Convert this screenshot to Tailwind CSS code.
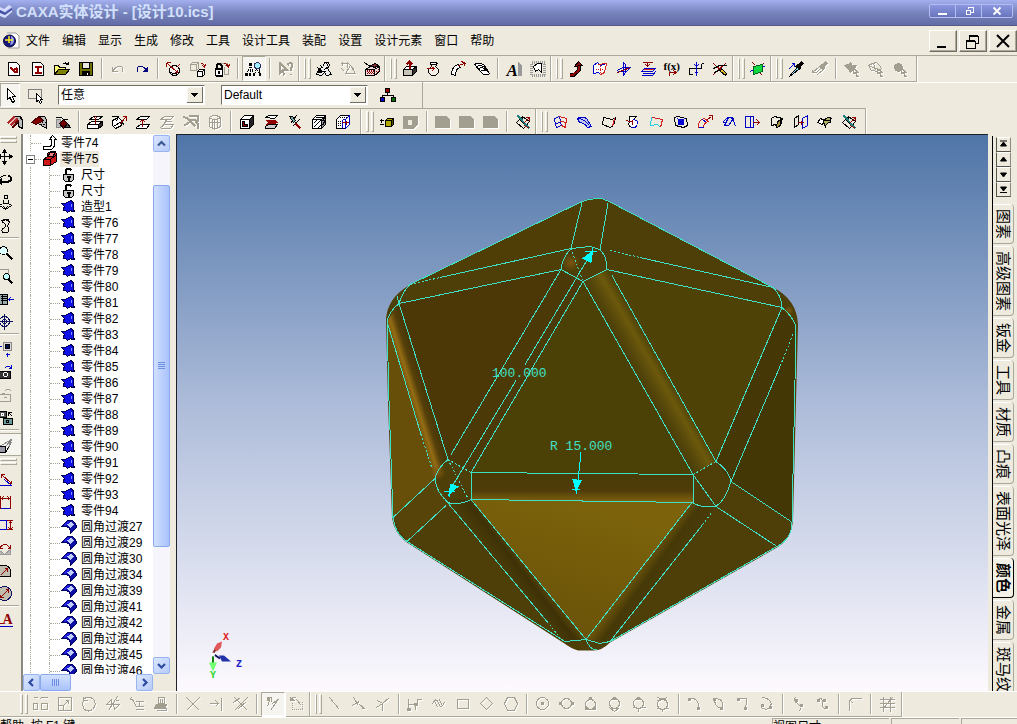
<!DOCTYPE html>
<html lang="zh-CN">
  <head>
    <meta charset="utf-8" />
    <title>CAXA实体设计 - [设计10.ics]</title>
    <script src="https://cdn.jsdelivr.net/npm/@tailwindcss/browser@4"></script>
  </head>
  <body class="h-screen overflow-hidden flex flex-col bg-[#eeeade] text-black text-xs font-['Liberation_Sans','Noto_Sans_CJK_SC',sans-serif]">
    <!-- Title bar -->
    <header class="h-[26px] shrink-0 flex items-center bg-linear-to-b from-[#a3b0f0] via-[#7884bd] to-[#626ba5] border-b border-[#55598a]">
      <svg class="w-3 h-6 shrink-0" viewBox="0 0 12 24">
        <path d="M0 6L4 8L9 4L12 6L5 11L0 9ZM0 11L5 13L12 8V11L5 17L0 15Z" fill="#d5dcff" />
        <path d="M0 9L5 12L12 7V9L5 14L0 12Z" fill="#4450a8" />
      </svg>
      <h1 class="ml-1 pb-0.5 flex-1 text-[15px] leading-5 font-bold text-[#d3e0fb] whitespace-nowrap">CAXA实体设计 - [设计10.ics]</h1>
      <div class="mr-1 flex h-3.5 mb-1 rounded-xs border border-[#b4bdf2] bg-linear-to-b from-[#8a97e0] to-[#6975bb]">
        <button class="w-[26px] flex justify-center items-center border-r border-[#b4bdf2]" aria-label="最小化">
          <svg class="w-3 h-3" viewBox="0 0 12 12"><path d="M1 8H10V10H1Z" fill="#fff" /></svg>
        </button>
        <button class="w-[26px] flex justify-center items-center border-r border-[#b4bdf2]" aria-label="还原">
          <svg class="w-3 h-3" viewBox="0 0 12 12" shape-rendering="crispEdges"><path d="M5 4V2.5H10V7H8M3 5.500H7.500V9.500H3Z" fill="none" stroke="#fff" /></svg>
        </button>
        <button class="w-[30px] flex justify-center items-center" aria-label="关闭">
          <svg class="w-3 h-3" viewBox="0 0 12 12"><path d="M2.500 2.500L9.500 9.500M9.500 2.500L2.500 9.500" stroke="#fff" stroke-width="1.800" /></svg>
        </button>
      </div>
    </header>

    <!-- Menu bar -->
    <nav class="h-[30px] shrink-0 flex items-center border-b border-[#aca899]">
      <svg class="w-[18px] h-[18px] ml-0.5 shrink-0" viewBox="0 0 18 18">
        <path d="M5 1H14L17 4V16H6" fill="#fff" stroke="#999" />
        <circle cx="7.500" cy="9" r="6" fill="#15157c" stroke="#080840" />
        <path d="M9 4C12 5 13 8 11 12L8 13L9 9Z" fill="#8fa0e8" />
        <path d="M7 4V11M3 8H11" stroke="#ffef20" stroke-width="1.500" />
      </svg>
      <div id="menu" class="flex flex-1 leading-4 whitespace-nowrap"></div>
      <div class="flex gap-0.5">
        <button class="w-7 h-[22px] bg-[#eeeade] border border-t-white border-l-white border-r-[#716f64] border-b-[#716f64] shadow-[inset_-1px_-1px_0_#aca899]" aria-label="最小化文档">
          <svg class="w-full h-full" viewBox="0 0 26 20"><path d="M7 15H16V17H7Z" /></svg>
        </button>
        <button class="w-7 h-[22px] bg-[#eeeade] border border-t-white border-l-white border-r-[#716f64] border-b-[#716f64] shadow-[inset_-1px_-1px_0_#aca899]" aria-label="还原文档">
          <svg class="w-full h-full" viewBox="0 0 26 20" shape-rendering="crispEdges"><path d="M9 9V5H18V12H15M6 10H15V17H6Z" fill="none" stroke="#000" stroke-width="1" /><path d="M9 5H18M6 10H15" stroke="#000" stroke-width="2" /></svg>
        </button>
        <button class="w-7 h-[22px] bg-[#eeeade] border border-t-white border-l-white border-r-[#716f64] border-b-[#716f64] shadow-[inset_-1px_-1px_0_#aca899]" aria-label="关闭文档">
          <svg class="w-full h-full" viewBox="0 0 26 20"><path d="M7 4L19 16M19 4L7 16" stroke="#000" stroke-width="2" /></svg>
        </button>
      </div>
    </nav>

    <!-- Standard tools -->
    <div class="h-[26px] shrink-0 flex">
      <div
        class="flex pl-0.5 pr-1 border-r border-b border-[#aca899] shadow-[1px_1px_0_#fff]"
        role="toolbar"
        data-tools="newdoc newdraw open save | undo:d redo | sphere cubes lockcube | *find | help:d || mech mechOff:d redbox || extrude pot sweep loft | letterA stamp || elbow patch planes stack fx axis cutpen || green || dropper dropOff:d | blob1:d blob2:d blob3:d"
      ></div>
    </div>

    <!-- Selection filters -->
    <div class="h-[26px] shrink-0 flex">
      <div class="flex items-center border-r border-[#aca899] w-[423px]">
        <button class="w-5 h-6 flex items-center justify-center border border-[#aca899] border-b-white border-r-white bg-[#f6f4ee]" aria-label="选择">
          <svg class="w-[18px] h-[18px] shrink-0" viewBox="-.5 -.5 18 18" shape-rendering="crispEdges"><path d="M6 2V13L8.500 11L11 16L13 15L11 10H14Z" fill="#fff" stroke="#000" /></svg>
        </button>
        <button class="w-6 h-6 ml-1 flex items-center justify-center" aria-label="框选">
          <svg class="w-[18px] h-[18px] shrink-0" viewBox="-.5 -.5 18 18" shape-rendering="crispEdges"><path d="M1 3H14V12H1Z" fill="none" stroke="#808080" /><path d="M9 7V15L11 14L13 17L14 16L13 13H15Z" fill="#fff" stroke="#000" /></svg>
        </button>
        <label class="relative ml-2.5">
          <span class="sr-only">过滤</span>
          <select class="appearance-none block w-[147px] h-5 pl-0.5 pr-5 bg-white border border-[#716f64] border-r-white border-b-white leading-[18px]">
            <option>任意</option>
          </select>
          <svg class="absolute right-0.5 top-0.5 w-4 h-4 pointer-events-none" viewBox="0 0 16 16" shape-rendering="crispEdges"><path d="M0 0H16V16H0Z" fill="#716f64" /><path d="M0 0H15V15H0Z" fill="#f8f6f0" /><path d="M1 1H15V15H1Z" fill="#eeeade" /><path d="M4 6H11L7.500 10Z" /></svg>
        </label>
        <label class="relative ml-4">
          <span class="sr-only">配置</span>
          <select class="appearance-none block w-[147px] h-5 pl-0.5 pr-5 bg-white border border-[#716f64] border-r-white border-b-white leading-[18px]">
            <option>Default</option>
          </select>
          <svg class="absolute right-0.5 top-0.5 w-4 h-4 pointer-events-none" viewBox="0 0 16 16" shape-rendering="crispEdges"><path d="M0 0H16V16H0Z" fill="#716f64" /><path d="M0 0H15V15H0Z" fill="#f8f6f0" /><path d="M1 1H15V15H1Z" fill="#eeeade" /><path d="M4 6H11L7.500 10Z" /></svg>
        </label>
        <button class="w-6 h-6 ml-2 flex items-center justify-center" aria-label="结构">
          <svg class="w-[18px] h-[18px] shrink-0" viewBox="-.5 -.5 18 18" shape-rendering="crispEdges"><path d="M8 6V9M3 11V9H14V11" fill="none" stroke="#000" /><path d="M6 2H10V6H6Z" fill="#900000" stroke="#000" /><path d="M1 11H5V15H1Z" fill="#0000c0" stroke="#000" /><path d="M12 11H16V15H12Z" fill="#007000" stroke="#000" /></svg>
        </button>
      </div>
      <div class="flex-1 border-t border-white"></div>
    </div>

    <!-- Feature and surface tools -->
    <div class="h-[26px] shrink-0 flex">
      <div
        class="flex pl-[3px] pr-1 border-r border-t border-[#aca899] shadow-[1px_0_0_#fff]"
        role="toolbar"
        data-tools="fillet chamfer draft | shell trim lift liftOff:d rib:d cyl:d | cubeL sandwich cross hatch hatch2 ||| plusbox cubeOff:d | g1:d g2:d g3:d | sketchcut || mesh coons sheet pot3 sheet2 star pipe offset extend sheet3 mirror wrap sketchcut"
      ></div>
    </div>

    <!-- Workspace -->
    <main class="flex-1 min-h-0 flex">
      <aside id="side" class="w-[21px] shrink-0 overflow-hidden flex flex-col" role="toolbar"></aside>

      <!-- Design tree -->
      <section class="w-[151px] shrink-0 flex flex-col pr-0.5 border-l-2 border-[#8c8980] bg-[#eeeade]">
        <div class="flex-1 min-h-0 flex">
          <ul id="tree" class="flex-1 min-w-0 pt-px overflow-hidden bg-white leading-4 whitespace-nowrap"></ul>
          <div class="w-[17px] shrink-0 flex flex-col pt-px bg-[#f5f5fb]">
            <button class="h-[17px] rounded-xs border border-[#98b4ee] bg-linear-to-br from-[#dbe6ff] to-[#b7cbf8]" aria-label="向上">
              <svg class="w-full h-full" viewBox="0 0 15 15"><path d="M4 9.500L7.500 6L11 9.500" fill="none" stroke="#3c5a90" stroke-width="2.200" /></svg>
            </button>
            <div class="h-[33px]"></div>
            <div class="h-[362px] flex items-center justify-center rounded-xs border border-[#8aa8ea] bg-linear-to-r from-[#d2e0ff] to-[#a9c2fb]">
              <svg class="w-2 h-2" viewBox="0 0 8 8" shape-rendering="crispEdges"><path d="M0 .5H7M0 2.500H7M0 4.500H7M0 6.500H7" stroke="#6c8fe0" /></svg>
            </div>
            <div class="flex-1"></div>
            <button class="h-[17px] rounded-xs border border-[#98b4ee] bg-linear-to-br from-[#dbe6ff] to-[#b7cbf8]" aria-label="向下">
              <svg class="w-full h-full" viewBox="0 0 15 15"><path d="M4 6L7.500 9.500L11 6" fill="none" stroke="#2c4aa0" stroke-width="2.200" /></svg>
            </button>
          </div>
        </div>
        <div class="h-[17px] shrink-0 flex mr-[17px] bg-[#f8f8fc]">
          <button class="w-[17px] rounded-xs border border-[#98b4ee] bg-linear-to-br from-[#dbe6ff] to-[#b7cbf8]" aria-label="向左">
            <svg class="w-full h-full" viewBox="0 0 15 15"><path d="M9 4L5.500 7.500L9 11" fill="none" stroke="#2c4aa0" stroke-width="2.200" /></svg>
          </button>
          <div class="w-[31px] flex items-center justify-center rounded-xs border border-[#8aa8ea] bg-linear-to-b from-[#d2e0ff] to-[#a9c2fb]">
            <svg class="w-2 h-2" viewBox="0 0 8 8" shape-rendering="crispEdges"><path d="M.5 0V7M2.500 0V7M4.500 0V7M6.500 0V7" stroke="#6c8fe0" /></svg>
          </div>
          <div class="flex-1"></div>
          <button class="w-[17px] rounded-xs border border-[#98b4ee] bg-linear-to-br from-[#dbe6ff] to-[#b7cbf8]" aria-label="向右">
            <svg class="w-full h-full" viewBox="0 0 15 15"><path d="M6 4L9.500 7.500L6 11" fill="none" stroke="#2c4aa0" stroke-width="2.200" /></svg>
          </button>
        </div>
      </section>

      <!-- 3D viewport -->
      <section class="ml-1 flex-1 min-w-0 border-t border-l border-[#202028] bg-linear-to-b from-[#4f75a7] from-0% via-[#b0bedb] via-50% to-[#fdf9fe] to-100%">
        <svg class="block w-full h-full" viewBox="177 135 811 555">
          <defs>
            <linearGradient id="bandRight" gradientUnits="userSpaceOnUse" x1="636" y1="378" x2="662" y2="363">
              <stop offset="0" stop-color="#483b06" />
              <stop offset=".3" stop-color="#54460a" />
              <stop offset=".7" stop-color="#6c590c" />
              <stop offset="1" stop-color="#4d4107" />
            </linearGradient>
            <linearGradient id="bandMid" x1="0" y1="0" x2="0" y2="1">
              <stop offset="0" stop-color="#493b06" />
              <stop offset=".6" stop-color="#4f3c08" />
              <stop offset="1" stop-color="#82640f" />
            </linearGradient>
            <linearGradient id="bandLeft" gradientUnits="userSpaceOnUse" x1="408" y1="396" x2="424" y2="391">
              <stop offset="0" stop-color="#6b500a" />
              <stop offset=".35" stop-color="#946c14" />
              <stop offset=".7" stop-color="#55400a" />
              <stop offset="1" stop-color="#4a3807" />
            </linearGradient>
            <linearGradient id="bandLow" gradientUnits="userSpaceOnUse" x1="508" y1="575" x2="530" y2="558">
              <stop offset="0" stop-color="#4a3c08" />
              <stop offset=".5" stop-color="#3e3106" />
              <stop offset="1" stop-color="#6b540a" />
            </linearGradient>
            <linearGradient id="bandLow2" gradientUnits="userSpaceOnUse" x1="636" y1="570" x2="658" y2="586">
              <stop offset="0" stop-color="#6f570a" />
              <stop offset=".5" stop-color="#463908" />
              <stop offset="1" stop-color="#493c08" />
            </linearGradient>
            <linearGradient id="bottomFace" gradientUnits="userSpaceOnUse" x1="600" y1="500" x2="560" y2="640">
              <stop offset="0" stop-color="#7c630b" />
              <stop offset="1" stop-color="#6a5209" />
            </linearGradient>
            <radialGradient id="glow">
              <stop offset="0" stop-color="#7a5510" />
              <stop offset="1" stop-color="#7a5510" stop-opacity="0" />
            </radialGradient>
          </defs>

          <!-- Solid body -->
          <path d="M582 201Q590 197 602 198Q607 199 611 202L773 287Q797 299 798 324L796 400L793 520Q791 539 777 547L610 642Q602 650 594 650H578Q571 648 563 642L407 542Q394 533 392 517L388 400L386 318Q388 297 409 285Z" fill="#4d3f07" />
          <path d="M399 303L561 269L448 459Z" fill="#4b3806" />
          <path d="M410 284L582 201L571 248Z" fill="#503e07" />
          <path d="M387 321L435 478L393 517L389 400Z" fill="#684f09" />
          <path d="M387 321L399 303L448 459L435 478Z" fill="url(#bandLeft)" />
          <path d="M561 269L583 281L471 472L448 459Z" fill="#4b3a07" />
          <path d="M583 281L693 474L471 472Z" fill="#4b4107" />
          <path d="M607 269L782 307L716 461Z" fill="#4f4207" />
          <path d="M583 281L607 269L716 461L693 474Z" fill="url(#bandRight)" />
          <path d="M782 307L796 326L731 481L716 461Z" fill="#453806" />
          <path d="M796 326L792 522L731 481Z" fill="#443706" />
          <path d="M471 472L693 474V502L471 499Z" fill="url(#bandMid)" />
          <path d="M471 499L692 502L586 639Z" fill="url(#bottomFace)" />
          <path d="M435 478L450 503L407 541L393 517Z" fill="#574409" />
          <path d="M445 499L471 499L586 639L565 641Z" fill="url(#bandLow)" />
          <path d="M692 502L716 506L610 641L586 639Z" fill="url(#bandLow2)" />
          <circle cx="571" cy="262" r="9" fill="url(#glow)" />
          <circle cx="438" cy="472" r="8" fill="url(#glow)" />
          <circle cx="789" cy="310" r="5" fill="url(#glow)" />

          <!-- Edges -->
          <g fill="none" stroke="#3fe0c4" stroke-width="1" shape-rendering="crispEdges">
            <path d="M582 201L410 284M582 201Q590 198 602 198L611 202L773 287M582 202L571 248M608 203L600 249" />
            <path d="M440 277L571 248L590 246L600 249M399 303L561 269L583 281L607 269L782 307M640 257L773 287" />
            <path d="M571 248Q562 258 561 269M600 249Q607 256 607 269M410 284Q402 292 399 303Q389 311 387 321M397 296L399 303M773 287Q781 294 782 307Q792 315 796 326" />
            <path d="M387 321L389 400L393 517Q395 534 407 541L565 641L586 639L600 643L610 641L777 546Q792 538 792 522L795 380L796 326" />
            <path d="M387 321L421 434M399 303L448 459M561 269L451 454M583 281L471 472M583 281L693 474M612 275L716 461" />
            <path d="M782 307L716 461M780 366L731 481M471 472L693 474V502L471 499Z" />
            <path d="M448 459Q437 468 435 478Q436 493 450 503Q462 504 471 499M435 478L393 517M446 505L407 541M445 499L547 621M471 499L586 639Q590 650 597 649" />
            <path d="M586 639L692 502M702 525L610 641M693 474L716 506M716 461Q729 470 731 481Q726 499 716 506Q702 508 692 502M731 481L791 521M716 506L777 546" />
            <path d="M410 284L440 277M610 250L640 257M793 334L780 366M421 434L432 468M448 459L471 472M693 474L716 461M571 248L583 281M448 459L468 498M547 621L559 636M711 513L702 525" stroke-dasharray="2 2" />
          </g>

          <!-- Dimensions -->
          <g fill="none" stroke="#00ffff" shape-rendering="crispEdges">
            <path d="M588 258L525 364M516 380L452 486" stroke="#3fe0c4" />
            <path d="M581 452L578 480" />
            <path d="M592 251L583 258L591 262ZM449 494L451 484L458 486ZM576 490L573 479L581 480Z" fill="#00ffff" />
            <path d="M585 251H597M592 247V254M444 491H455M449 487V496M572 489H580M576 486V493" />
          </g>
          <g fill="#3fe0c4" class="font-['Liberation_Mono',monospace] text-[13px]">
            <text x="492" y="376">100.000</text>
            <text x="550" y="449">R 15.000</text>
          </g>

          <!-- Axis triad -->
          <path d="M213 654V664" stroke="#108010" stroke-width="2" />
          <path d="M209 662H217L213 671Z" fill="#70ff70" />
          <path d="M213 653L216 648" stroke="#802020" stroke-width="2" />
          <path d="M214 648L217 643L222 641L221 647L217 651Z" fill="#e05858" />
          <path d="M214 654L220 658" stroke="#101060" stroke-width="2" />
          <path d="M219 655L224 655L231 661L222 661Z" fill="#2030a8" />
          <circle cx="213" cy="654" r="2" fill="#fff" />
          <g class="font-['Liberation_Mono',monospace] text-[10px] font-bold">
            <text x="223" y="639" fill="#e02020">X</text>
            <text x="236" y="666" fill="#2020c8">Z</text>
            <text x="210" y="677" fill="#20d820">Y</text>
          </g>
        </svg>
      </section>

      <!-- Catalog tabs -->
      <aside class="w-[29px] shrink-0 pl-1 pr-0.5 pt-0.5 overflow-hidden flex flex-col">
        <div id="pager" class="flex flex-col pl-[3px] h-[68px] border-l border-black pt-px"></div>
        <div id="catalog" class="flex-1 min-h-0 overflow-hidden flex flex-col border-l border-black"></div>
      </aside>
    </main>

    <!-- Sketch tools -->
    <div class="h-[26px] shrink-0 flex border-t border-white">
      <div
        class="flex pl-[15px] pr-0.5 border-r border-b border-[#aca899] shadow-[1px_1px_0_#fff]"
        role="toolbar"
        data-tools="= move:d scale:d rotate:d mirr:d offs:d stampS:d | x:d ext:d xcut:d | *proj:d projRef:d || line:d tan:d perp:d | poly:d spl:d rect:d diamond:d hexa:d | c1:d c2:d c3:d c4:d c5:d c6:d | a1:d a2:d a3:d a4:d | s1:d s2:d | corner:d | grid:d"
      ></div>
    </div>

    <!-- Status bar -->
    <footer class="h-[7px] shrink-0 flex overflow-hidden border-t border-white leading-4">
      <p class="flex-1 whitespace-nowrap">帮助, 按 F1 键.</p>
      <div class="w-[117px] border-l border-t border-[#aca899] whitespace-nowrap">视图尺寸</div>
      <div class="w-[68px] ml-0.5 border-l border-t border-[#aca899]"></div>
      <div class="w-14 ml-0.5 border-l border-t border-[#aca899]"></div>
    </footer>

    <script>
      const G = '#a39f90';
      const R = '#900000';
      const B = '#0000c8';
      const K = '#000';

      // outline only / filled with an outline
      const s = (c, d, w = 1) => `<path d="${d}" fill="none" stroke="${c}" stroke-width="${w}"/>`;
      const f = (c, d, k = K) => `<path d="${d}" fill="${c}" stroke="${k}"/>`;
      const o = (c, x, y, r, fill = 'none') =>
        `<circle cx="${x}" cy="${y}" r="${r}" fill="${fill}" stroke="${c}"/>`;

      const cube = f('#fff', 'M2 6L6 2H15V11L11 15H2Z') + f('#999', 'M11 6L15 2V11L11 15Z') + s(K, 'M2 6H11V15');
      const cut = s(K, 'M2 9L8 3L15 8L9 15ZM5 6L12 12M8 3L8 9') + s('#208080', 'M3 2L15 15', 2) + s(R, 'M15 4L9 10M11 4H15V7M10 12L15 15');
      const gblock = f(G, 'M1 3H12L15 6V14H7L1 14Z', G);
      const dots = (c, d) => `<path d="${d}" fill="none" stroke="${c}" stroke-dasharray="1 1"/>`;

      const icons = {
        newdoc: f('#fff', 'M3 2H11L14 5V15H3Z') + s(R, 'M5 7L8 10L12 7M8 11H11V8', 2),
        newdraw: f('#fff', 'M3 2H11L14 5V15H3Z') + s(R, 'M5 6H12M5 12H12M8.500 6V12', 2),
        open: f('#ffff70', 'M1 14V5H5L6 7H12V9') + f('#808000', 'M1 14L5 9H16L12 14Z') + s(K, 'M9 4Q12 1 15 4M15 1V4H12'),
        save: f('#707000', 'M2 2H15V15H2Z') + f('#e8e8e0', 'M5 2H12V8H5Z') + f(K, 'M5 11H12V15H5Z') + s('#fff', 'M10 12V14'),
        undo: s(G, 'M3 6V11H8M3 11Q8 4 12 6Q15 8 12 12'),
        redo: s('#000080', 'M14 6V11H9M14 11Q9 4 5 6Q2 8 5 12') + f('#000080', 'M14 7V11H10Z', '#000080'),
        sphere: o(K, 9, 10, 5, '#f4f0ec') + s(K, 'M5 12Q9 14 13 12') + s(R, 'M1 2H5M1 2V6M2 3L12 12M12 9V12H9M14 4L11 7'),
        cubes: s(G, 'M1 4L3 2H9V8L7 10H1ZM1 4H7V10M7 4L9 2') + f('#fff', 'M8 11L10 9H15V14L13 16H8Z') + s(K, 'M8 11H13V16M13 11L15 9') + s(R, 'M11 3Q15 3 15 6M13 5L15 7L16 4'),
        lockcube: s(G, 'M6 3H14L11 6M11 6V14M15 8V14H10') + f('#fff', 'M2 8H9V15H2Z') + s(K, 'M3 8V5Q5 2 8 5V8M2 8H9M2 15H9M5 10V13', 2) + s(R, 'M10 3Q14 3 15 6M13 5L15 7L16 4'),
        find: dots(K, 'M5 3L1 14M5 3L8 14M11 8L9 14M11 8L15 15M5 4V14M2 10H8') + f(K, 'M4 3H6V5H4ZM0 13H2V15H0ZM4 13H5V15H4ZM8 13H9V15H8ZM14 13H15V15H14Z') + o('#303060', 12, 5, 3, '#a0f0ff') + s(K, 'M14 8V12'),
        help: s(G, 'M2 2V13L5 10L7 15M2 2L9 9H5', 2) + s(G, 'M10 5Q11 2 14 3Q16 5 13 8V10M13 13V14', 2),
        mech: f('#eee', 'M1 14L3 9L8 6L9 2H13L14 5L12 8L16 14L11 15L9 12L6 15Z') + s(K, 'M2 7L8 12M3 11H10M11 3L13 6L9 9M5 5L7 8', 1) + f(K, 'M3 10H6V12H3Z'),
        mechOff: s(G, 'M1 3H8V7M3 1V5M6 13L11 5L16 13ZM2 8L5 11') + s(G, 'M8 2L15 9'),
        redbox: f('#f0dada', 'M2 9L7 6H16V11L11 15H2Z') + dots(R, 'M3 11H11M3 13H11M4 12H11M13 10V13M15 8V12M3 10H11') + s(K, 'M2 9H11V15M11 9L16 6M1 2L5 5M4 4L7 7', 1) + f('#803030', 'M7 5L12 3L15 5L11 7Z'),
        extrude: f('#fff', 'M2 9L5 6H15L11 9Z') + f('#c8c4b8', 'M2 9H11V15H2Z') + f('#333', 'M11 9L15 6V11L11 15Z') + s(R, 'M8 8V2M5 4L8 1L11 4', 2),
        pot: f('#f4f0e8', 'M5 3H12L10 6L13 9V12L10 15H6L3 12V9L6 6Z') + f('#fff', 'M5 2H11V4H5Z') + s(R, 'M1 8H8M6 6L9 8L6 11'),
        sweep: f('#fff', 'M2 14Q2 6 9 4L11 7Q6 8 6 15Z') + s(R, 'M9 5L15 3M12 1L16 3L14 6'),
        loft: f('#fff', 'M1 4Q6 1 11 5L16 13Q13 16 9 13Z') + s(K, 'M3 6Q7 4 12 7M5 8Q9 6 13 9M7 11Q11 8 15 11M1 4L9 13'),
        letterA: f('#999', 'M13 2V15H16V5Z', '#999') + `<text x="1" y="15" font-size="17" font-weight="bold" font-style="italic" font-family="Liberation Serif">A</text>`,
        stamp: `<path d="M2 2H15V15H2Z" fill="none" stroke="#999" stroke-width="3" stroke-dasharray="1 1"/>` + f('#fff', 'M4 6L8 3H12V12L9 9L6 11Z'),
        elbow: s(K, 'M2 14H7L11 10V5', 4) + s(R, 'M2 14H6L11 10V4', 2) + f(R, 'M7 6L11 1L15 5Z'),
        patch: f('#fff', 'M2 5L6 2L9 5L15 3L13 12L9 14L7 12L2 13Z', B) + s('#d02020', 'M7 4L15 3L13 12L9 14') + dots('#d02020', 'M4 9H12M9 5V12'),
        planes: s(B, 'M2 10L7 7H15L11 11H2M8 2V15L10 12V4Z') + s(R, 'M2 12L15 7'),
        stack: s(R, 'M3 2H13M8 2V6M6 4L8 6L10 4') + s(B, 'M5 8H16L13 11H2Z') + s(B, 'M3 13H13M2 15H13L16 11') + s('#d02020', 'M4 9H14'),
        fx: `<text x="0" y="9" font-size="11" font-weight="bold" font-family="Liberation Serif">f(x)</text>` + s(R, 'M6 15V12H12M10 10L13 12L10 14', 1),
        axis: s(K, 'M2 14V8H14V3M2 14H5M14 3H16') + s(B, 'M9 1V15M7 4L9 6L11 4M7 13L9 11L11 13', 1),
        cutpen: s(R, 'M2 3L15 15M15 2L2 14', 1) + s(K, 'M2 8L8 5H15M3 12L9 9') + f('#e0c020', 'M10 8L15 13L14 15L9 11Z'),
        green: s(R, 'M3 2L6 5M14 3L12 5M5 12L3 14M11 13L13 15') + s(B, 'M1 11L4 9M13 7L16 5') + f('#10d840', 'M4 6L13 4V11L4 14Z', '#006020'),
        dropper: s(K, 'M15 2L11 6M9 5L13 9', 3) + f('#80e0f0', 'M10 7L4 13L3 15L5 14L12 8Z') + s(B, 'M1 9L7 3M7 6V3H4'),
        dropOff: s(G, 'M15 2L11 6M9 5L13 9', 3) + s(G, 'M10 7L4 13M12 9L6 14M1 9V12H5M1 12L8 6'),
        blob1: f(G, 'M1 5L5 4L7 2L9 5L13 5L10 9L7 12L5 9Z', G) + s(G, 'M10 8V13L12 12L14 16M10 8L15 12H12M13 14V16H15'),
        blob2: s(G, 'M1 5L5 3L9 2L12 5L14 8L10 11L4 10ZM3 6L11 9M6 3L8 10') + s(G, 'M10 8V13L12 12L14 16M10 8L15 12H12M13 14V16H15'),
        blob3: o(G, 7, 7, 4, G) + s(G, 'M10 8V13L12 12L14 16M10 8L15 12H12M13 14V16H15'),

        fillet: f('#bbb', 'M8 3H13L16 7V15L12 13V9L6 14') + s('#b02828', 'M1 10L8 3M4 12L11 5', 2) + s('#f0b0b0', 'M3 11L9 4') + s('#600', 'M6 14L12 7', 2) + s(K, 'M8 3H14L16 6V15'),
        chamfer: f('#bbb', 'M8 3H14L16 6V15L11 12L8 10') + f('#800000', 'M1 9L8 3L13 7L6 11Z', '#400') + dots(K, 'M12 9L15 13M11 11L15 15M13 7L16 10') + s(K, 'M8 3H14L16 6V15'),
        draft: s(K, 'M1 4H7L9 6H13') + f('#bbb', 'M2 6H6L6 14H2Z', '#888') + f('#700000', 'M5 10L9 6L13 10L9 15Z') + f('#555', 'M13 10L16 14H10Z'),
        shell: f('#fff', 'M1 11L5 8H16L12 11Z') + f('#fff', 'M1 11H12V15H1Z') + f('#333', 'M12 11L16 8V12L12 15Z') + f('#fff', 'M3 6L7 3H16L12 6Z') + s(R, 'M9 10V4M7 5L9 3L11 5'),
        trim: f('#fff', 'M2 7L8 4L11 7V12L5 15L2 12Z') + s(K, 'M1 3H8L6 8M3 13L11 8L14 12') + s(R, 'M9 11L15 4M12 3H16V7'),
        lift: f('#fff', 'M2 14L6 11H15L12 15H2Z') + f('#fff', 'M2 6L6 3H15L12 6Z') + s(R, 'M8 13V6M5 9L8 6L11 9', 1),
        liftOff: s(G, 'M2 14L6 11H15L12 15H2M2 6L6 3H15L12 6Z') + s(G, 'M6 8H13M8 6L5 12', 1),
        rib: s(G, 'M1 3L6 6H12L15 10V15M4 4L13 13M6 2H15V8M2 12L8 8', 2),
        cyl: s(G, 'M3 4Q8 0 14 4V13Q8 17 3 13ZM3 4Q8 8 14 4M6 5V15M8 6V16M11 5V15M3 9H14'),
        cubeL: f('#fff', 'M2 6L6 2H15L11 6Z') + f('#fff', 'M2 6H11V15H2Z') + f('#222', 'M11 6L15 2V11L11 15Z') + f('#800000', 'M4 8H6V11H9V13H4Z') + s(K, 'M2 6V15H11'),
        sandwich: f('#fff', 'M3 4L6 2H15L12 5Z') + s(R, 'M3 7H13M5 9H15M3 11H12', 1) + f('#ccc', 'M3 13L6 11H15L12 15H3Z') + s(R, 'M4 8H14M4 10H13'),
        cross: s(K, 'M3 3L14 14M10 2L4 10M13 6L6 13') + f('#6ab0b0', 'M3 3L6 3L9 7L7 9Z') + s(R, 'M9 10L14 15', 2),
        hatch: cube + s(K, 'M3 10L7 6M3 14L11 6M7 15L11 11M5 4H13M12 12L15 6M12 8L14 4') + s(K, 'M2 6L6 2H15V11L11 15H2Z', 1),
        hatch2: f('#fff', 'M2 6L6 2H15V11L11 15H2Z', K) + dots(K, 'M3 8H7M3 10H7M3 12H7M5 4H13') + s(B, 'M8 6V15M8 6H11V15M11 6L15 2V11L11 15') + s(R, 'M7 9H14M12 7V11', 1),
        plusbox: s(K, 'M1 7H5M3 5V9M1 11H5') + f('#b0a800', 'M7 7L9 5H15V11L13 13H7Z') + f('#505000', 'M13 7L15 5V11L13 13Z') + s(K, 'M7 7H13'),
        cubeOff: f(G, 'M1 3H15V11L11 15H1Z', G) + f('#eeeade', 'M6 7H9V11H6Z', '#eeeade'),
        g1: gblock,
        g2: gblock,
        g3: gblock,
        sketchcut: cut,
        mesh: s(B, 'M2 5L7 3L8 8L3 11ZM3 11L4 14L9 12L8 8') + s('#d02020', 'M7 3L14 5L13 14L9 12M8 8L14 9'),
        coons: f('#c8c8e8', 'M1 5Q5 2 10 5L15 13L11 14Q8 9 3 9Z', B) + s(B, 'M3 5Q8 6 13 12'),
        sheet: f('#f0ece0', 'M3 4L12 6L15 4L13 12L10 14L2 11Z') + s('#d02020', 'M14 5L12 13'),
        pot3: f('#fff', 'M5 3H12L9 6Q14 7 13 11Q11 15 7 14Q3 12 5 8Z', K) + s(B, 'M9 6Q14 7 13 11Q11 15 7 14') + s(R, 'M2 7L9 9M8 6V11'),
        sheet2: s('#d02020', 'M3 4L9 5L14 6L12 14') + s('#20d0e0', 'M3 4L2 12L9 11L12 14'),
        star: s(K, 'M2 4L5 3L14 5L15 12L11 14L3 12Z') + f('#1010e0', 'M6 6H11V11H6Z', B) + s(B, 'M5 5L12 12M12 5L5 12'),
        pipe: s('#d02020', 'M2 14Q1 7 8 5L12 8Q7 9 7 14Z') + s(B, 'M2 14H7M6 6L10 9') + s(R, 'M11 6L15 3M12 2H16V6'),
        offset: f('#ddd', 'M8 4L4 12H8L13 5Z', B) + s(B, 'M2 9L7 4H12L15 13M2 9H6'),
        extend: s(B, 'M1 3H6V14H1ZM6 3H9V14H6') + s(R, 'M8 9H15M12 6L15 9L12 12', 1),
        sheet3: f('#f0ece0', 'M3 5L6 3L14 5L12 12L8 14L7 11L3 12Z') + f('#a09040', 'M9 8L13 6L11 13L8 14Z'),
        mirror: s(K, 'M2 5L6 2V11L2 14Z') + s(B, 'M10 5L15 2V12L10 15Z') + s(R, 'M5 9H11M9 7V11', 1),
        wrap: f('#fff', 'M1 9L4 5L8 7L6 11Z') + f('#b0b060', 'M7 9Q8 4 14 4V9Q10 9 9 13Z') + s(K, 'M8 6Q12 9 15 5'),

        move: s(G, 'M1 2H5M8 2H15M1 8H5V14H1ZM9 8H15V14H9ZM9 2L7 4'),
        scale: s(G, 'M2 2H15V15H2ZM2 10H7V15M7 10L12 5M9 5H12V8'),
        rotate: s(G, 'M3 4Q8 -1 13 4Q17 9 12 14Q8 17 4 14Q1 10 3 5M3 1V5H7'),
        mirr: s(G, 'M2 9L7 4V9ZM9 9H15L10 14ZM13 1L4 15M11 5H14'),
        offs: s(G, 'M1 4H4L8 11H15M7 6H15M11 6V10M7 14H15M1 4L3 2'),
        stampS: s(G, 'M6 2H12V8H6ZM4 9H14L13 12H3ZM1 13H14V15H4M8 3V8M10 3V8', 1) + f(G, 'M4 9H14L12 12H2Z', G),
        x: s(G, 'M2 2L15 15M15 2L2 15', 1),
        ext: s(G, 'M1 8H10M7 5L10 8L7 11M13 2V15'),
        xcut: s(G, 'M2 2L15 15M15 2L2 15M1 7L8 2M6 13L14 6', 1),
        proj: s(G, 'M5 5L3 11M13 5L6 15M8 8L15 3M2 2H7V6') + f(G, 'M3 3H5V5H3Z', G),
        projRef: s(G, 'M2 2L7 6M8 4L13 10M3 2H7') + dots(G, 'M4 7V14H14V5') + f(G, 'M2 3H4V5H2Z', G),
        line: s(G, 'M3 2L13 14', 1),
        tan: s(G, 'M3 2L8 10M2 10L9 6M9 9L14 13M11 13H14'),
        perp: s(G, 'M2 12L8 8L15 2M8 8V15M3 5L8 8'),
        poly: s(G, 'M2 3V15M2 9H11V4H15M9 9V14') + f(G, 'M1 13H4V15H1ZM8 8H11V10H8Z', G),
        spl: s(G, 'M2 9Q5 1 8 7Q10 15 14 7M4 5L7 12M9 4L12 11'),
        rect: s(G, 'M3 4H14V13H3Z'),
        diamond: s(G, 'M8 2L14 8L8 14L2 8Z'),
        hexa: s(G, 'M5 2H12L15 8L12 15H5L2 8Z'),
        c1: o(G, 8, 8, 6) + f(G, 'M7 7H9V9H7Z', G),
        c2: o(G, 8, 8, 5) + f(G, 'M1 7H3V9H1ZM13 7H15V9H13Z', G),
        c3: o(G, 8, 9, 5) + f(G, 'M7 2H9V4H7ZM3 12H5V14H3ZM11 12H13V14H11Z', G),
        c4: o(G, 8, 8, 5) + s(G, 'M3 12L8 16L13 12') + f(G, 'M7 2H9V4H7Z', G),
        c5: o(G, 8, 8, 5) + s(G, 'M2 12H6M10 12H15M8 12V16') + f(G, 'M7 2H9V4H7Z', G),
        c6: o(G, 8, 9, 5) + s(G, 'M3 2L13 5M13 2L3 5M2 13H5M11 13H14M8 13V16'),
        a1: s(G, 'M3 3Q13 2 12 13') + f(G, 'M2 3H4V5H2ZM11 12H13V14H11Z', G),
        a2: s(G, 'M4 3Q14 3 12 13M4 4Q4 10 10 13') + f(G, 'M3 3H5V5H3ZM10 12H12V14H10Z', G),
        a3: s(G, 'M3 3H12V8L10 14') + f(G, 'M3 3H5V5H3ZM10 12H12V14H10Z', G),
        a4: s(G, 'M4 2Q15 4 12 11Q8 16 3 12') + f(G, 'M3 9H5V11H3ZM11 11H13V13H11Z', G),
        s1: s(G, 'M5 2Q2 5 7 8Q13 12 9 15') + f(G, 'M5 4H7V6H5ZM10 9H12V11H10Z', G),
        s2: s(G, 'M3 5Q8 0 8 8Q8 16 14 11') + f(G, 'M3 4H5V6H3ZM9 4H11V6H9ZM11 11H13V13H11Z', G),
        corner: s(G, 'M3 15V6Q4 3 7 3H15M4 5L7 8'),
        grid: s(G, 'M1 4H16M1 8H16M1 12H16M5 1V16M12 1V16M4 14L14 2', 1),

        pan: s(K, 'M8 2V15M2 8H15', 1) + f(K, 'M8 1L10 4H6ZM8 16L10 13H6ZM1 8L4 6V10ZM16 8L13 6V10Z'),
        orbit: s(K, 'M12 4Q16 6 14 9Q10 12 3 10', 2) + s(K, 'M3 7Q5 4 9 4') + f(K, 'M5 7V13L1 10Z'),
        walk: s(K, 'M8 1H11V4H8ZM7 5V9H12V5M6 9L3 11L9 15L15 11L12 9M7 12L9 14L11 12'),
        fly: s(K, 'M9 2Q4 2 6 5Q12 7 8 10Q4 12 6 15H11Q14 11 11 9L13 4ZM5 3L13 2'),
        zoom: o(K, 7, 6, 4, '#dff') + s(K, 'M10 9L16 15', 2),
        zoomWin: s('#999', 'M1 2H12V9') + o(K, 10, 9, 3, '#bff') + s(K, 'M12 12L16 16', 2),
        fit: f('#9aa', 'M3 4H11V14H3Z') + s(K, 'M4 6H11M4 8H11M4 10H11M6 4V14') + s(B, 'M17 9H12M14 7L12 9L14 11', 1),
        target: o('#101060', 8, 8, 5) + o('#101060', 8, 8, 2) + s('#101060', 'M8 0V16M0 8H16'),
        look: f('#ddd', 'M7 2H15V10H7Z', '#888') + f('#001050', 'M9 4H13V8H9Z') + s(B, 'M1 6H5M3 4V8M11 12V16M9 14H13'),
        cam: f('#333', 'M3 8H14V15H3Z') + o('#fff', 9, 11, 2) + s(B, 'M8 5Q11 0 15 5M15 1V5H12'),
        camOff: s(G, 'M3 8H14V15H3ZM5 7H8M7 11H10M8 5Q11 0 15 5'),
        cams: f('#555', 'M2 2H10V8H2Z') + f('#6a9a98', 'M7 9H16V15H7Z') + o('#fff', 6, 5, 1) + o(K, 11, 12, 1) + s(K, 'M12 3L16 7M12 3V6M12 3H15'),
        persp: f('#99a', 'M3 10H9V16H3Z') + s('#888', 'M3 10L15 3M9 10L15 3L11 14M9 16L15 6') + s(K, 'M3 10V16H9L12 11'),
        dimA: s(B, 'M3 6V15H15L8 9') + s(R, 'M5 4L15 13M5 7V4H8M12 13H15V10'),
        dimH: s(B, 'M4 6V15H14V6') + s(R, 'M4 2V15M14 2V15M4 5H14M7 3L5 5L7 7M11 3L13 5L11 7'),
        dimV: s(B, 'M2 4H10V13H2Z') + s(R, 'M10 4H16M10 13H16M14 4V13M12 7L14 5L16 7M12 11L14 13L16 11'),
        ang: f('#bbb', 'M2 10L8 15L14 10V15H2Z', '#999') + s(R, 'M3 9Q8 1 14 9M3 5V9H6M14 5V9H11'),
        rad: f('#c0bcae', 'M2 3H9Q14 4 14 9V14H2Z', K) + s(R, 'M4 13L11 6M8 6H11V9'),
        dia: o('#101060', 8, 8, 7, '#c0bcae') + s(R, 'M4 12L12 4M9 4H12V7M4 9V12H7'),
        text: `<text x="6" y="11" font-size="14" font-weight="bold" fill="#900000" font-family="Liberation Serif">A</text>` + s(B, 'M2 14H16') + s(R, 'M2 5V11H6'),
      };

      const svg = (body) =>
        `<svg class="w-[18px] h-[18px] shrink-0" viewBox="-.5 -.5 18 18" shape-rendering="crispEdges">${body}</svg>`;

      const grip = `<i class="w-[3px] my-0.5 border border-white border-r-[#aca899] border-b-[#aca899]"></i>`;
      const rule = `<i class="w-0.5 mr-0.5 bg-[#aca899] border-r border-white"></i>`;

      // "|" separator, "||" and "|||" group breaks, "=" grip, "*" pressed, ":d" disabled
      function tool(token) {
        if (token === '|') {
          return `<span class="w-2 shrink-0 flex justify-center py-0.5"><i class="w-0.5 bg-[#aca899] border-r border-white"></i></span>`;
        }
        if (token === '=') {
          return `<span class="w-3.5 shrink-0 flex justify-end gap-0.5 pr-px">${grip}${grip}</span>`;
        }
        if (token === '||' || token === '|||') {
          const width = token === '||' ? 'w-3.5' : 'w-5';
          return `<span class="${width} shrink-0 flex justify-end gap-0.5 pr-px">${rule}${grip}${grip}</span>`;
        }
        const pressed = token.startsWith('*');
        const [name, off] = token.replace('*', '').split(':');
        const face = pressed
          ? 'border border-[#aca899] border-r-white border-b-white bg-[#f6f4ee]'
          : '';
        const dim = off ? 'drop-shadow-[1px_1px_0_#fff]' : '';
        return `<button class="w-6 shrink-0 flex items-center justify-center ${face} ${dim}" aria-label="${name}">${svg(icons[name])}</button>`;
      }

      document.querySelectorAll('[data-tools]').forEach((bar) => {
        bar.innerHTML = bar.dataset.tools.split(' ').map(tool).join('');
      });

      document.getElementById('menu').innerHTML = [
        '文件', '编辑', '显示', '生成', '修改', '工具', '设计工具', '装配', '设置', '设计元素', '窗口', '帮助',
      ]
        .map((m) => `<button class="px-1.5">${m}</button>`)
        .join('');

      // Camera and dimension tools down the left edge
      const sideTools =
        '= pan orbit walk fly - zoom zoomWin fit target - look cam camOff cams - persp = dimA dimH dimV ang rad dia - text';
      document.getElementById('side').innerHTML = sideTools
        .split(' ')
        .map((t) => {
          if (t === '-') return `<hr class="h-1 shrink-0 mr-0.5 border-0 border-t border-[#aca899] shadow-[inset_0_1px_0_#fff]">`;
          if (t === '=') return `<span class="h-[11px] shrink-0 mr-1 py-0.5 flex flex-col gap-px"><i class="h-[3px] border border-white border-r-[#aca899] border-b-[#aca899]"></i><i class="h-[3px] border border-white border-r-[#aca899] border-b-[#aca899]"></i></span>`;
          const face = t === 'persp' ? 'bg-[#f6f4ee] border-y border-[#aca899]' : '';
          return `<button class="h-[23px] shrink-0 -ml-3 flex items-center justify-center ${face}" aria-label="${t}">${svg(icons[t])}</button>`;
        })
        .join('');

      // Design tree
      const treeIcons = {
        curve: f('#fff', 'M2 12H7Q10 12 10 9V5H8L11 1L15 5H13V9Q13 15 8 15H2Z'),
        part: f('#d01818', 'M2 9L6 6V3L9 1H14L15 4V11L9 15H2Z') + f('#f08080', 'M6 6L9 2H14L11 6Z') + s(K, 'M2 9H9V15M9 9L15 4'),
        lock: s(K, 'M5 8V4Q8 0 11 4', 2) + f('#c8c8c8', 'M3 8H13V13L11 15H5L3 13Z') + s(K, 'M6 10H10M8 10V14', 2),
        solid: f('#1010e8', 'M1 5H5L10 2L12 3L13 5V11L14 13H12L10 12L7 14L5 12H3V10L4 8Z', '#000050') + s('#8090ff', 'M11 5V8'),
        round: f('#1010a8', 'M1 8L7 2H12L15 5L16 9L10 15V12L8 9L5 8Z', '#000060') + f('#c0ceff', 'M7 6L11 4L13 6L10 9Z', '#c0ceff') + s('#2020e0', 'M4 7L9 3', 2),
      };
      const nodes = [['lock', '尺寸'], ['lock', '尺寸'], ['solid', '造型1']];
      for (let n = 76; n <= 94; n++) nodes.push(['solid', '零件' + n]);
      [27, 29, 30, 34, 39, 41, 42, 44, 45, 46].forEach((n) => nodes.push(['round', '圆角过渡' + n]));

      document.getElementById('tree').innerHTML =
        `<li class="h-4 flex items-center"><i class="w-[11px] ml-[7px] h-full border-l border-dotted border-[#aca899] flex items-center"><i class="w-full border-t border-dotted border-[#aca899]"></i></i>${svg(treeIcons.curve)}<span class="ml-0.5">零件74</span></li>
        <li class="h-4 flex items-center"><i class="w-[9px] h-[9px] ml-[3px] border border-[#848484] bg-white flex items-center justify-center"><i class="w-[5px] h-px bg-black"></i></i><i class="w-1.5 border-t border-dotted border-[#aca899]"></i>${svg(treeIcons.part)}<span class="ml-px px-px bg-[#eeeade]">零件75</span></li>` +
        nodes
          .map(
            ([icon, label]) =>
              `<li class="h-4 flex items-center"><i class="w-[19px] ml-[7px] h-full shrink-0 border-l border-dotted border-[#aca899]"></i><i class="w-[11px] h-full shrink-0 border-l border-dotted border-[#aca899] flex items-center"><i class="w-full border-t border-dotted border-[#aca899]"></i></i>${svg(treeIcons[icon])}<span class="ml-[3px]">${label}</span></li>`
          )
          .join('');

      document.getElementById('pager').innerHTML = [
        ['首页', 'M3 3H10M6.500 4L9.500 8H3.500Z'],
        ['上一页', 'M6.500 4L9.500 8H3.500Z'],
        ['下一页', 'M3.500 5H9.500L6.500 9Z'],
        ['末页', 'M3.500 4H9.500L6.500 8ZM3 9.500H10'],
      ]
        .map(
          ([name, d]) =>
            `<button class="w-[15px] h-[15px] bg-[#eeeade] border border-[#55534a] border-t-white border-r-[#8c8980]" aria-label="${name}"><svg class="w-full h-full" viewBox="0 0 13 13"><path d="${d}" stroke="#000" stroke-width="1"/></svg></button>`
        )
        .join('');

      const tabs = ['图素', '高级图素', '钣金', '工具', '材质', '凸痕', '表面光泽', '颜色', '金属', '斑马纹'];
      document.getElementById('catalog').innerHTML = tabs
        .map((t) => {
          const on = t === '颜色' ? 'font-bold border-black bg-[#f4f1e6]' : 'border-[#aca899]';
          return `<button class="w-[21px] shrink-0 p-0 pt-[5px] pb-[4px] mb-0.5 text-[15px] leading-5 whitespace-nowrap border-r border-b rounded-br-sm rounded-tr-sm shadow-[inset_0_1px_0_#fff] [writing-mode:vertical-rl] [text-orientation:sideways] ${on}">${t}</button>`;
        })
        .join('');
    </script>
  </body>
</html>
